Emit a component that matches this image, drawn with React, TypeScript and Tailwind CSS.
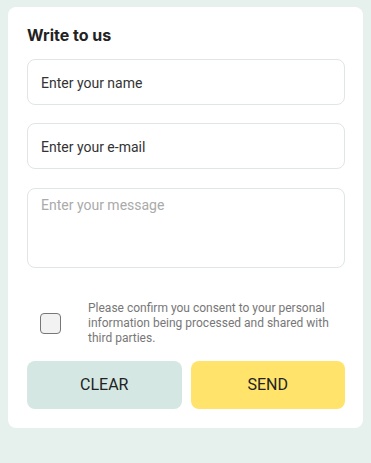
import React from "react";

export default function App() {
  return (
    <div className="min-h-[463px] w-full bg-[#e6f0ed] px-2 pt-[7px] pb-[35px]" style={{ fontFamily: "Roboto, 'Liberation Sans', sans-serif" }}>
      <div className="rounded-lg bg-white pl-[19px] pr-[18px] pt-[18px] pb-[19px]">
        <h2 className="text-[16px] font-bold leading-[20px] text-[#222]" style={{ fontFamily: "Inter, Roboto, sans-serif" }}>Write to us</h2>
        <div className="mt-[14px] flex flex-col">
          <div className="flex h-[46px] items-center rounded-lg border border-[#dfe6e4] px-[13px] pt-[2px] text-[14px] text-[#333]">Enter your name</div>
          <div className="mt-[18px] flex h-[46px] items-center rounded-lg border border-[#dfe6e4] px-[13px] pt-[2px] text-[14px] text-[#333]">Enter your e-mail</div>
          <div className="mt-[19px] h-[80px] rounded-lg border border-[#dfe6e4] px-[13px] pt-[6px] text-[14px] text-[#aaa]">Enter your message</div>
        </div>
        <div className="mt-[33px] flex items-center">
          <div className="ml-[13px] h-[21px] w-[21px] shrink-0 rounded-[4px] border border-[#777] bg-[#f2f2f2]" />
          <p className="ml-[27px] text-[12px] leading-[15px] text-[#777]">Please confirm you consent to your personal information being processed and shared with third parties.</p>
        </div>
        <div className="mt-[15px] flex gap-[9px]">
          <button className="h-[48px] flex-1 rounded-lg bg-[#d4e7e2] text-[16px] text-[#222]">CLEAR</button>
          <button className="h-[48px] flex-1 rounded-lg bg-[#ffe36b] text-[16px] text-[#222]">SEND</button>
        </div>
      </div>
    </div>
  );
}
